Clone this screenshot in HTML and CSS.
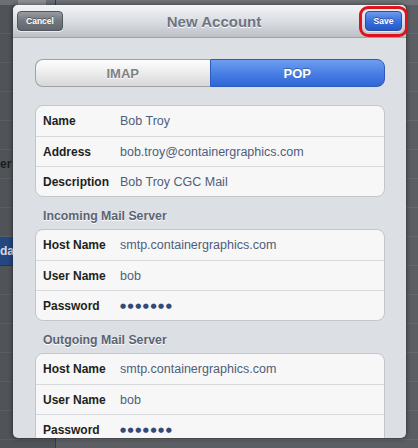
FILE: index.html
```html
<!DOCTYPE html>
<html lang="en">
<head>
    <meta charset="UTF-8">
    <meta name="viewport" content="width=device-width, initial-scale=1.0">
    <title>New Account</title>
    <link rel="stylesheet" href="styles.css">
</head>
<body>
    <div class="screen">
        <!-- dimmed settings page behind the sheet -->
        <div class="backdrop">
            <div class="sidebar">
                <div class="side-top"></div>
                <div class="side-row"></div>
                <div class="side-row"></div>
                <div class="side-row"></div>
                <div class="side-row"></div>
                <div class="side-row"></div>
                <div class="side-row">er</div>
                <div class="side-row"></div>
                <div class="side-row"></div>
                <div class="side-row selected">dars</div>
                <div class="side-row"></div>
                <div class="side-row"></div>
                <div class="side-row"></div>
                <div class="side-row"></div>
                <div class="side-row"></div>
                <div class="side-row"></div>
            </div>
            <div class="detail">
                <div class="detail-top"><span class="toggle">OFF</span></div>
                <div class="detail-row"></div>
                <div class="detail-row"></div>
                <div class="detail-row"></div>
                <div class="detail-row"></div>
                <div class="detail-row"></div>
                <div class="detail-row"></div>
                <div class="detail-row"></div>
                <div class="detail-row"></div>
                <div class="detail-row"></div>
                <div class="detail-row"></div>
                <div class="detail-row"></div>
                <div class="detail-row"></div>
                <div class="detail-row"></div>
                <div class="detail-row"></div>
                <div class="detail-row"></div>
            </div>
        </div>

        <div class="modal">
            <div class="modal-header">
                <button class="nav-btn cancel">Cancel</button>
                <h1>New Account</h1>
                <button class="nav-btn save">Save</button>
            </div>
            <div class="modal-body">
                <div class="segmented">
                    <div class="segment">IMAP</div>
                    <div class="segment active">POP</div>
                </div>

                <div class="group">
                    <div class="row"><span class="label">Name</span><span class="value">Bob Troy</span></div>
                    <div class="row"><span class="label">Address</span><span class="value">bob.troy@containergraphics.com</span></div>
                    <div class="row"><span class="label">Description</span><span class="value">Bob Troy CGC Mail</span></div>
                </div>

                <div class="section-title">Incoming Mail Server</div>
                <div class="group">
                    <div class="row"><span class="label">Host Name</span><span class="value">smtp.containergraphics.com</span></div>
                    <div class="row"><span class="label">User Name</span><span class="value">bob</span></div>
                    <div class="row"><span class="label">Password</span><span class="value dots">●●●●●●●</span></div>
                </div>

                <div class="section-title">Outgoing Mail Server</div>
                <div class="group">
                    <div class="row"><span class="label">Host Name</span><span class="value">smtp.containergraphics.com</span></div>
                    <div class="row"><span class="label">User Name</span><span class="value">bob</span></div>
                    <div class="row"><span class="label">Password</span><span class="value dots">●●●●●●●</span></div>
                </div>
            </div>
        </div>

        <div class="save-ring"></div>
    </div>
</body>
</html>
```

FILE: styles.css
```css
body {
    margin: 0;
    background: #55585c;
    font-family: "Liberation Sans", Arial, sans-serif;
}
.screen {
    position: relative;
    width: 418px;
    height: 448px;
    overflow: hidden;
}

/* backdrop */
.backdrop {
    display: flex;
    height: 100%;
}
.sidebar {
    width: 55px;
    background: #505357;
    border-right: 1px solid #3a3c3f;
}
.side-top {
    height: 5px;
    background: #6c6f73;
}
.side-row {
    height: 28px;
    border-bottom: 1px solid #5a5d61;
    font-size: 12px;
    font-weight: bold;
    line-height: 28px;
    color: #1c1d1f;
    white-space: nowrap;
    overflow: hidden;
}
.side-row.selected {
    background: #24477f;
    color: #d6dbe6;
    border-bottom-color: #1c3766;
}
.detail {
    flex: 1;
    background: #5b5e62;
}
.detail-top {
    height: 5px;
    background: #6f7276;
    display: flex;
    align-items: flex-end;
}
.toggle {
    margin-left: -38px;
    width: 28px;
    height: 14px;
    background: #8e9094;
    color: #3b3d40;
    font-size: 8px;
    font-weight: bold;
    text-align: center;
    line-height: 8px;
}
.detail-row {
    height: 28px;
    border-bottom: 1px solid #67696d;
}

/* sheet */
.modal {
    position: absolute;
    left: 13px;
    top: 5px;
    width: 393px;
    height: 433px;
    border-radius: 5px;
    overflow: hidden;
    background: #dcdfe3;
    box-shadow: 0 0 5px rgba(0, 0, 0, 0.55);
}
.modal-header {
    height: 33px;
    display: flex;
    align-items: center;
    justify-content: space-between;
    padding: 0 4px;
    background: linear-gradient(#f4f5f7, #d8dbe0 55%, #bcc1c8);
    border-bottom: 1px solid #9ea3aa;
    box-sizing: border-box;
}
.modal-header h1 {
    margin: 0;
    font-size: 15px;
    color: #6c7481;
    text-shadow: 0 1px 0 #fff;
}
.nav-btn {
    height: 20px;
    padding: 0;
    border-radius: 4px;
    font-family: "Liberation Sans", Arial, sans-serif;
    font-size: 8.5px;
    font-weight: bold;
    color: #fff;
    text-shadow: 0 -1px 0 rgba(0, 0, 0, 0.35);
    box-shadow: 0 1px 0 rgba(255, 255, 255, 0.6);
}
.cancel {
    width: 46px;
    background: linear-gradient(#989ca2, #72777d 50%, #62676e);
    border: 1px solid #52575d;
}
.save {
    width: 37px;
    background: linear-gradient(#6f9bec, #3b6fdc 50%, #2558cc);
    border: 1px solid #2b4f9c;
}

.modal-body {
    padding: 21px 21px 0 22px;
}
.segmented {
    display: flex;
    height: 28px;
    margin-bottom: 18px;
}
.segment {
    flex: 1;
    display: flex;
    align-items: center;
    justify-content: center;
    font-size: 13px;
    font-weight: bold;
    color: #7f8184;
    text-shadow: 0 1px 0 #fff;
    background: linear-gradient(#fdfdfd, #ececed 50%, #d6d7d9);
    border: 1px solid #9fa1a5;
    border-right: none;
    border-radius: 8px 0 0 8px;
}
.segment.active {
    color: #fff;
    text-shadow: 0 -1px 0 rgba(0, 0, 0, 0.3);
    background: linear-gradient(#6d9ef0, #4a80e4 50%, #2d66d6);
    border: 1px solid #2b5cbc;
    border-radius: 0 8px 8px 0;
}

.group {
    background: #f7f7f7;
    border: 1px solid #c2c5ca;
    border-radius: 8px;
}
.row {
    display: flex;
    align-items: center;
    height: 30px;
    padding-left: 7px;
    box-sizing: border-box;
}
.row + .row {
    border-top: 1px solid #d8d9dc;
}
.label {
    width: 77px;
    font-size: 12px;
    font-weight: bold;
    color: #1e1f21;
}
.value {
    font-size: 12.5px;
    color: #4f5d7c;
}
.dots {
    font-family: "DejaVu Sans", sans-serif;
    font-size: 7px;
    letter-spacing: 1.5px;
    color: #334a78;
}
.section-title {
    margin: 11px 0 5px 8px;
    height: 16px;
    line-height: 16px;
    font-size: 12.3px;
    font-weight: bold;
    color: #5b6374;
    text-shadow: 0 1px 0 #fff;
}

.save-ring {
    position: absolute;
    left: 359px;
    top: 6px;
    width: 43px;
    height: 25px;
    border: 3px solid #e0121b;
    border-radius: 9px;
}
```
